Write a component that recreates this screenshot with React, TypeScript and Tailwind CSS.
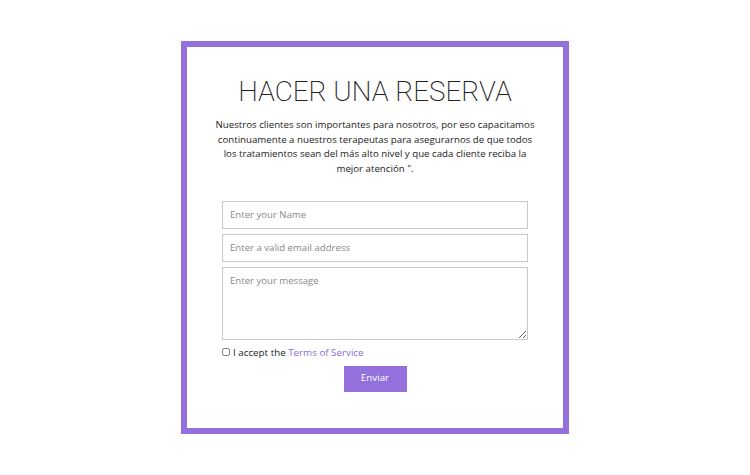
import React from "react";

export default function App() {
  return (
    <div className="w-[750px] h-[475px] bg-white flex justify-center pt-[41px]" style={{ fontFamily: '"Open Sans", sans-serif' }}>
      <div className="w-[388px] h-[393px] border-[6px] border-[#9370db] flex flex-col items-center pt-[28px]">
        <h1 className="text-[27.8px] leading-[34px] text-[#222]" style={{ fontFamily: 'Roboto, sans-serif', fontWeight: 200 }}>
          HACER UNA RESERVA
        </h1>
        <p className="mt-[9px] w-[340px] text-center text-[9.7px] leading-[14.7px] text-[#222]">
          Nuestros clientes son importantes para nosotros, por eso capacitamos
          <br />
          continuamente a nuestros terapeutas para asegurarnos de que todos
          <br />
          los tratamientos sean del más alto nivel y que cada cliente reciba la
          <br />
          mejor atención ".
        </p>
        <form className="mt-[24px] w-[306px] flex flex-col gap-[5px]">
          <input
            className="h-[28px] w-full border border-[#c8c8c8] px-[7px] text-[9.6px] text-[#333] placeholder:text-[#888] outline-none"
            placeholder="Enter your Name"
          />
          <input
            className="h-[28px] w-full border border-[#c8c8c8] px-[7px] text-[9.6px] text-[#333] placeholder:text-[#888] outline-none"
            placeholder="Enter a valid email address"
          />
          <textarea
            className="h-[73px] w-full border border-[#c8c8c8] px-[7px] pt-[6px] text-[9.6px] leading-[14px] text-[#333] placeholder:text-[#888] outline-none resize-y"
            placeholder="Enter your message"
          />
          <label className="flex items-center text-[9.8px] leading-[15px] text-[#222]">
            <input type="checkbox" className="w-[8px] h-[8px] m-0 mr-[3px]" />
            <span>I accept the <span className="text-[#8d6bd6]">Terms of Service</span></span>
          </label>
          <div className="flex justify-center mt-[1px]">
            <button type="button" className="w-[63px] h-[26px] bg-[#9370db] text-white text-[9.8px]">
              Enviar
            </button>
          </div>
        </form>
      </div>
    </div>
  );
}
